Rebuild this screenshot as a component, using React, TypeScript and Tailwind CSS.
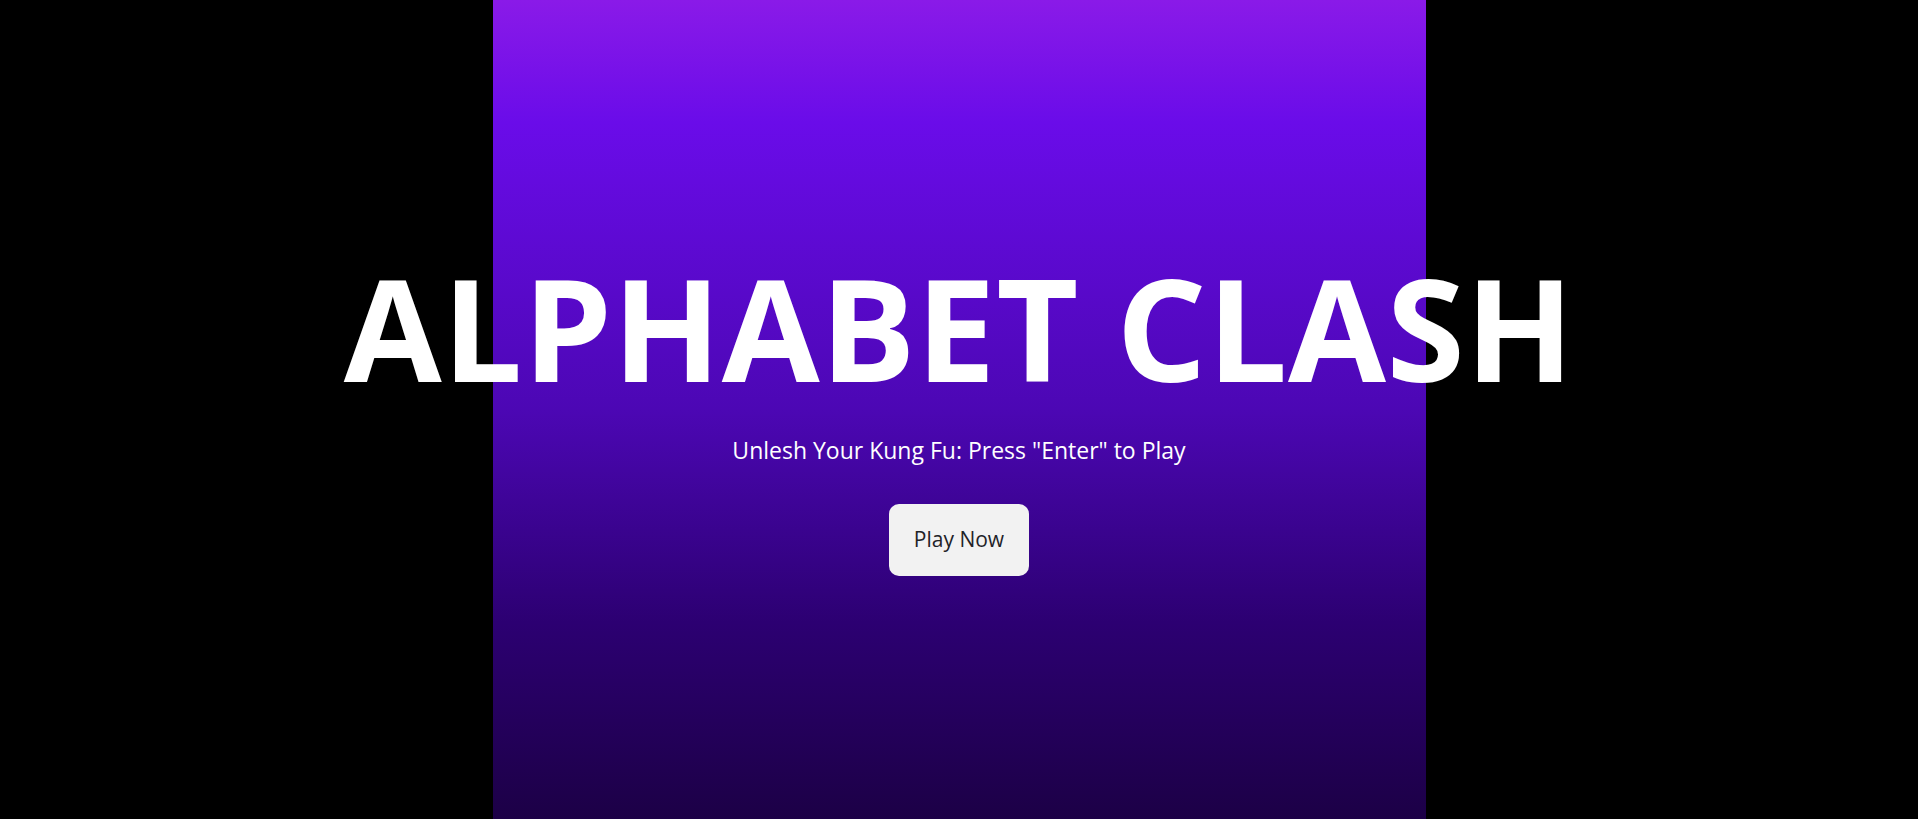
const App = () => {
  return (
    <div className="min-h-screen w-full bg-black" style={{ fontFamily: '"Open Sans", "Noto Sans", sans-serif' }}>
      {/* Game panel */}
      <div className="mx-auto flex h-screen w-[933px] flex-col items-center justify-center bg-[linear-gradient(to_bottom,#8a1ae8_0%,#6a0ce9_15%,#4c07b4_50%,#2c0072_76%,#1c0046_100%)] pt-[13px]">
        {/* Title */}
        <h1 className="whitespace-nowrap text-[142px] font-bold leading-none tracking-[0.5px] text-white">
          ALPHABET CLASH
        </h1>

        {/* Subtitle */}
        <p className="mt-[35px] text-[23px] text-white">
          Unlesh Your Kung Fu: Press "Enter" to Play
        </p>

        {/* Play button */}
        <button className="mt-[36px] h-[72px] w-[140px] rounded-[10px] bg-[#f2f2f2] text-[21px] text-[#1f2328]">
          Play Now
        </button>
      </div>
    </div>
  );
};

export default App;
